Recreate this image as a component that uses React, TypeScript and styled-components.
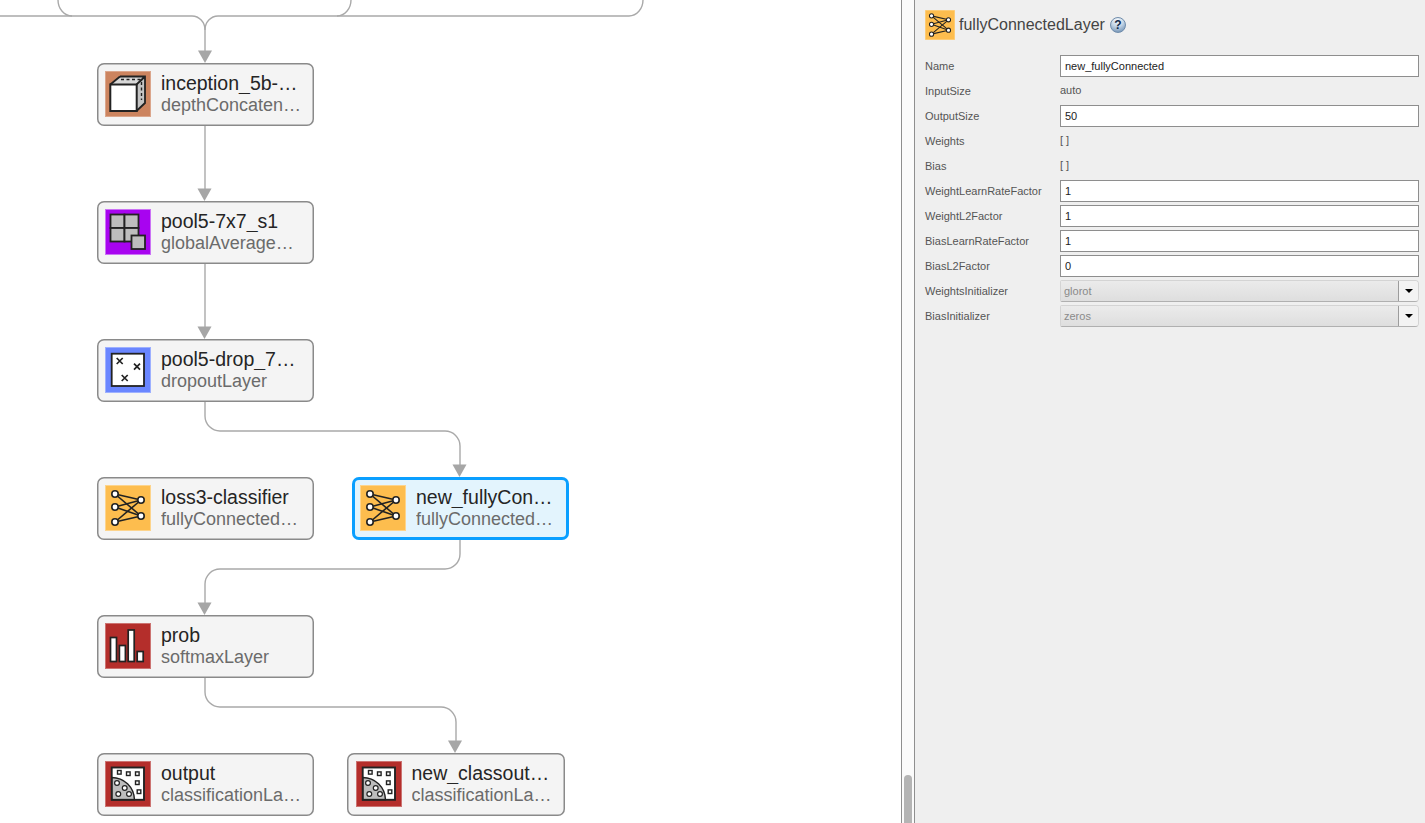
import React from 'react';
import styled, { createGlobalStyle } from 'styled-components';

const Global = createGlobalStyle`
  html, body { margin: 0; padding: 0; height: 100%; overflow: hidden; background: #fff; }
  * { box-sizing: border-box; }
`;

const Page = styled.div`
  display: flex;
  width: 100%;
  height: 100vh;
  overflow: hidden;
  font-family: "Liberation Sans", Arial, sans-serif;
`;

const Canvas = styled.main`
  position: relative;
  flex: 0 0 901px;
  background: #fff;
  overflow: hidden;
`;

const Edges = styled.svg`
  position: absolute;
  inset: 0;
  width: 100%;
  height: 100%;
`;

const NodeCard = styled.div<{ $x: number; $y: number; $selected?: boolean }>`
  position: absolute;
  left: ${(p) => p.$x - 0.5}px;
  top: ${(p) => p.$y - 0.5}px;
  width: 217.5px;
  height: 63px;
  display: flex;
  align-items: center;
  gap: 10px;
  padding-left: 8.5px;
  border-radius: 7px;
  background: ${(p) => (p.$selected ? '#e3f4fd' : '#f4f4f4')};
  box-shadow: ${(p) => (p.$selected ? 'inset 0 0 0 3px #0a9fff' : 'inset 0 0 0 1.5px #8a8a8a')};
`;

const IconTile = styled.svg`
  flex: 0 0 46px;
  width: 46px;
  height: 46px;
  display: block;
`;

const NodeText = styled.div`
  flex: 0 0 141px;
  width: 141px;
  min-width: 0;
`;

const NodeTitle = styled.div`
  font-size: 19.5px;
  line-height: 22px;
  margin: -1px 0 1px;
  color: #252525;
  white-space: nowrap;
  overflow: hidden;
  text-overflow: ellipsis;
`;

const NodeSub = styled.div`
  font-size: 18px;
  line-height: 21px;
  color: #6b6b6b;
  white-space: nowrap;
  overflow: hidden;
  text-overflow: ellipsis;
`;

const ScrollTrack = styled.div`
  position: relative;
  flex: 0 0 14px;
  background: #fbfbfb;
  border-left: 1.5px solid #8f8f8f;
  border-right: 1.5px solid #8f8f8f;
`;

const ScrollThumb = styled.div`
  position: absolute;
  left: 1.5px;
  width: 8px;
  bottom: 0;
  height: 48px;
  background: #b4b4b4;
  border-radius: 4px 4px 0 0;
`;

const Panel = styled.aside`
  flex: 1;
  background: #efefef;
  padding: 10px 6px 0 10px;
  min-width: 0;
`;

const PanelHeader = styled.header`
  display: flex;
  align-items: center;
  height: 30px;
  margin-bottom: 15px;
  gap: 4px;
`;

const HeaderIcon = styled.svg`
  width: 30px;
  height: 30px;
  display: block;
`;

const PanelTitle = styled.h2`
  margin: 0;
  font-size: 16px;
  font-weight: 400;
  color: #444;
  line-height: 30px;
`;

const HelpBadge = styled.span`
  width: 16px;
  height: 16px;
  margin-left: 1px;
  border-radius: 50%;
  border: 1px solid #6f8cab;
  background: radial-gradient(circle at 45% 15%, #f4f8fb 0%, #c4d5e6 45%, #5f83a9 100%);
  color: #12294a;
  font-size: 12px;
  font-weight: 700;
  line-height: 14px;
  text-align: center;
`;

const Form = styled.div`
  display: grid;
  grid-template-columns: 135px 1fr;
  grid-auto-rows: 22px;
  row-gap: 3px;
  align-items: center;
`;

const Label = styled.label`
  font-size: 11px;
  color: #555;
  line-height: 22px;
  white-space: nowrap;
`;

const TextInput = styled.input`
  width: 100%;
  height: 22px;
  border: 1px solid #8e8e8e;
  background: #fff;
  padding: 0 4px;
  margin: 0;
  font-family: inherit;
  font-size: 11px;
  color: #222;
  outline: none;
  border-radius: 0;
`;

const StaticValue = styled.span`
  font-size: 11px;
  color: #555;
  line-height: 20px;
  padding-bottom: 2px;
`;

const Select = styled.div`
  display: flex;
  height: 22px;
  border: 1px solid #d4d4d4;
  border-bottom-color: #b0b0b0;
  border-radius: 2px 4px 4px 2px;
  overflow: hidden;
`;

const SelectValue = styled.div`
  flex: 1;
  padding-left: 3px;
  font-size: 11px;
  line-height: 20px;
  color: #8a8a8a;
  background: linear-gradient(#ebebeb, #dedede);
`;

const SelectButton = styled.div`
  flex: 0 0 20px;
  display: flex;
  align-items: center;
  justify-content: center;
  background: #f3f3f3;
  border-left: 1px solid #9c9c9c;
  &::after {
    content: '';
    width: 0;
    height: 0;
    border-left: 4px solid transparent;
    border-right: 4px solid transparent;
    border-top: 4px solid #000;
  }
`;

const stroke = '#222';

const FcGlyph = () => {
  const left = [[10, 9], [10, 22], [10, 37]];
  const right = [[36, 15], [36, 31]];
  return (
    <>
      <rect width="46" height="46" fill="#fdbd4e" />
      <rect x="0.5" y="0.5" width="45" height="45" fill="none" stroke="#fdd48c" />
      {left.map((a, i) =>
        right.map((b, j) => (
          <line key={`${i}${j}`} x1={a[0]} y1={a[1]} x2={b[0]} y2={b[1]} stroke={stroke} strokeWidth="1.6" />
        )),
      )}
      {[...left, ...right].map((c, i) => (
        <circle key={i} cx={c[0]} cy={c[1]} r="3.2" fill="#fff" stroke={stroke} strokeWidth="1.6" />
      ))}
    </>
  );
};

const Fc = () => (
  <IconTile viewBox="0 0 46 46"><FcGlyph /></IconTile>
);

const Cube = () => (
  <IconTile viewBox="0 0 46 46">
    <rect width="46" height="46" fill="#cc845f" />
    <rect x="0.5" y="0.5" width="45" height="45" fill="none" stroke="#dba68c" />
    <path d="M5 13.5 L15 5.5 H40 L31.5 13.5 Z" fill="#d8d8d8" />
    <path d="M31.5 13.5 L40 5.5 V32 L31.5 40 Z" fill="#c4c4c4" />
    <path d="M15 5.5 H40 V32 L31.5 40 M40 5.5 L31.5 13.5" fill="none" stroke={stroke} strokeWidth="1.8" />
    <path d="M16 8.5 H37 M37 8.5 L35 10.5 M36.5 11 V29" fill="none" stroke={stroke} strokeWidth="1.4" strokeDasharray="3 2.5" />
    <rect x="5.3" y="13.5" width="26.4" height="26.5" fill="#fff" stroke={stroke} strokeWidth="2" />
    <path d="M5.3 13.5 L15 5.5" stroke={stroke} strokeWidth="1.8" />
  </IconTile>
);

const Pool = () => (
  <IconTile viewBox="0 0 46 46">
    <rect width="46" height="46" fill="#a804f0" />
    <rect x="0.5" y="0.5" width="45" height="45" fill="none" stroke="#cb72f5" />
    <g fill="#bdbdbd" stroke={stroke} strokeWidth="1.8">
      <rect x="5.5" y="5.5" width="14" height="13.5" />
      <rect x="19.5" y="5.5" width="14" height="13.5" />
      <rect x="5.5" y="19" width="14" height="13.5" />
      <rect x="19.5" y="19" width="14" height="13.5" />
      <rect x="26.5" y="26.5" width="13.5" height="13.5" />
    </g>
  </IconTile>
);

const Cross = ({ x, y }: { x: number; y: number }) => (
  <path d={`M${x - 3} ${y - 3} L${x + 3} ${y + 3} M${x + 3} ${y - 3} L${x - 3} ${y + 3}`} stroke={stroke} strokeWidth="1.7" />
);

const Dropout = () => (
  <IconTile viewBox="0 0 46 46">
    <rect width="46" height="46" fill="#6a86ff" />
    <rect x="0.5" y="0.5" width="45" height="45" fill="none" stroke="#9db0ff" />
    <rect x="6.7" y="6.7" width="32.3" height="32.3" fill="#fff" stroke={stroke} strokeWidth="1.8" />
    <Cross x={14.7} y={14} />
    <Cross x={32} y={19.6} />
    <Cross x={19.7} y={31} />
  </IconTile>
);

const Softmax = () => (
  <IconTile viewBox="0 0 46 46">
    <rect width="46" height="46" fill="#b42e2b" />
    <rect x="0.5" y="0.5" width="45" height="45" fill="none" stroke="#cc7371" />
    <g fill="#fff" stroke={stroke} strokeWidth="1.7">
      <rect x="5.5" y="14.5" width="6" height="24" />
      <rect x="14.4" y="22.5" width="6" height="16" />
      <rect x="23.2" y="7" width="6" height="31.5" />
      <rect x="32.2" y="28.5" width="6" height="10" />
    </g>
  </IconTile>
);

const Classify = () => (
  <IconTile viewBox="0 0 46 46">
    <rect width="46" height="46" fill="#b42e2b" />
    <rect x="0.5" y="0.5" width="45" height="45" fill="none" stroke="#cc7371" />
    <rect x="6.7" y="6.5" width="32.3" height="32.3" fill="#fff" />
    <path d="M6.7 16.5 C19 16.5 29 26 29.5 38.8 H6.7 Z" fill="#bdbdbd" stroke={stroke} strokeWidth="1.4" />
    <rect x="6.7" y="6.5" width="32.3" height="32.3" fill="none" stroke={stroke} strokeWidth="1.9" />
    {[[14.3, 11.3], [23.3, 12.7], [32.3, 12.7], [32.3, 21.7], [34, 30.7]].map((s, i) => (
      <rect key={i} x={s[0] - 1.8} y={s[1] - 1.8} width="3.6" height="3.6" fill="#fff" stroke={stroke} strokeWidth="1.4" />
    ))}
    {[[12, 22], [19.7, 27], [13.3, 33], [24, 33]].map((c, i) => (
      <circle key={i} cx={c[0]} cy={c[1]} r="2.4" fill="#fff" stroke={stroke} strokeWidth="1.2" />
    ))}
  </IconTile>
);

type NodeData = { x: number; y: number; name: string; type: string; icon: React.ReactNode; selected?: boolean };

const nodes: NodeData[] = [
  { x: 97, y: 63, name: 'inception_5b-output', type: 'depthConcatenationLayer', icon: <Cube /> },
  { x: 97, y: 201, name: 'pool5-7x7_s1', type: 'globalAveragePooling2dLayer', icon: <Pool /> },
  { x: 97, y: 339, name: 'pool5-drop_7x7_s1', type: 'dropoutLayer', icon: <Dropout /> },
  { x: 97, y: 477, name: 'loss3-classifier', type: 'fullyConnectedLayer', icon: <Fc /> },
  { x: 352, y: 477, name: 'new_fullyConnected', type: 'fullyConnectedLayer', icon: <Fc />, selected: true },
  { x: 97, y: 615, name: 'prob', type: 'softmaxLayer', icon: <Softmax /> },
  { x: 97, y: 753, name: 'output', type: 'classificationLayer', icon: <Classify /> },
  { x: 347.5, y: 753, name: 'new_classoutput', type: 'classificationLayer', icon: <Classify /> },
];

const edgePaths = [
  'M0 16 H192 A13 14 0 0 1 205 30 V52',
  'M58 0 A14 16 0 0 0 72 16',
  'M351 0 A14 16 0 0 1 337 16 H218 A13 14 0 0 0 205 30',
  'M643 0 A14 16 0 0 1 629 16 H337',
  'M205 125 V190',
  'M205 263 V328',
  'M205 401 V416 A15 15 0 0 0 220 431 H445 A15 15 0 0 1 460 446 V466',
  'M460 539 V554 A15 15 0 0 1 445 569 H220 A15 15 0 0 0 205 584 V604',
  'M205 677 V692 A15 15 0 0 0 220 707 H441 A15 15 0 0 1 456 722 V742',
];

const arrows: [number, number][] = [[205, 63], [204.5, 201], [204.5, 339], [459.5, 477], [204.5, 615], [455, 753]];

const rows: { label: string; kind: 'input' | 'static' | 'select'; value: string }[] = [
  { label: 'Name', kind: 'input', value: 'new_fullyConnected' },
  { label: 'InputSize', kind: 'static', value: 'auto' },
  { label: 'OutputSize', kind: 'input', value: '50' },
  { label: 'Weights', kind: 'static', value: '[ ]' },
  { label: 'Bias', kind: 'static', value: '[ ]' },
  { label: 'WeightLearnRateFactor', kind: 'input', value: '1' },
  { label: 'WeightL2Factor', kind: 'input', value: '1' },
  { label: 'BiasLearnRateFactor', kind: 'input', value: '1' },
  { label: 'BiasL2Factor', kind: 'input', value: '0' },
  { label: 'WeightsInitializer', kind: 'select', value: 'glorot' },
  { label: 'BiasInitializer', kind: 'select', value: 'zeros' },
];

export default function App() {
  return (
    <Page>
      <Global />
      <Canvas>
        <Edges>
          {edgePaths.map((d) => (
            <path key={d} d={d} fill="none" stroke="#a9a9a9" strokeWidth="1.4" />
          ))}
          {arrows.map(([x, y]) => (
            <polygon key={`${x}-${y}`} points={`${x - 7},${y - 12.5} ${x + 7},${y - 12.5} ${x},${y}`} fill="#a6a6a6" />
          ))}
        </Edges>
        {nodes.map((n) => (
          <NodeCard key={n.name} $x={n.x} $y={n.y} $selected={n.selected}>
            {n.icon}
            <NodeText>
              <NodeTitle>{n.name}</NodeTitle>
              <NodeSub>{n.type}</NodeSub>
            </NodeText>
          </NodeCard>
        ))}
      </Canvas>
      <ScrollTrack>
        <ScrollThumb />
      </ScrollTrack>
      <Panel>
        <PanelHeader>
          <HeaderIcon viewBox="0 0 46 46"><FcGlyph /></HeaderIcon>
          <PanelTitle>fullyConnectedLayer</PanelTitle>
          <HelpBadge>?</HelpBadge>
        </PanelHeader>
        <Form>
          {rows.map((r) => (
            <React.Fragment key={r.label}>
              <Label>{r.label}</Label>
              {r.kind === 'input' && <TextInput defaultValue={r.value} />}
              {r.kind === 'static' && <StaticValue>{r.value}</StaticValue>}
              {r.kind === 'select' && (
                <Select>
                  <SelectValue>{r.value}</SelectValue>
                  <SelectButton />
                </Select>
              )}
            </React.Fragment>
          ))}
        </Form>
      </Panel>
    </Page>
  );
}
